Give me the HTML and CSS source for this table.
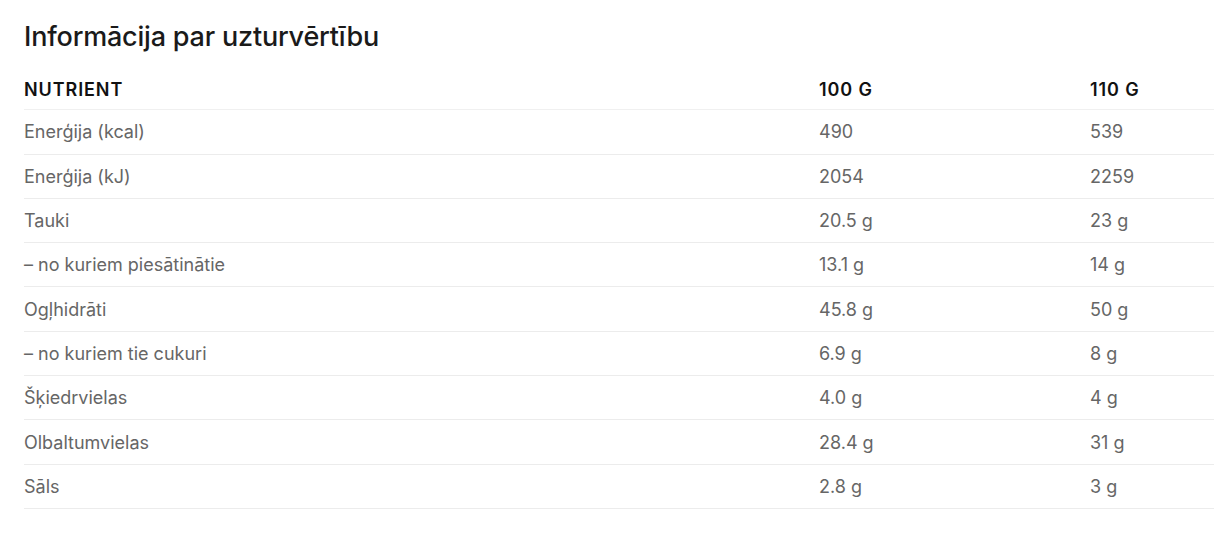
FILE: index.html
```html
<!DOCTYPE html>
<html lang="lv">

<head>
    <meta charset="UTF-8">
    <meta name="viewport" content="width=device-width, initial-scale=1.0">
    <title>Informācija par uzturvērtību</title>
    <link rel="stylesheet" href="styles.css">
</head>

<body>
    <div class="nutrition">
        <h2 class="nutrition-title">Informācija par uzturvērtību</h2>

        <table class="nutrition-table">
            <thead>
                <tr>
                    <th class="col-name">Nutrient</th>
                    <th class="col-a">100 g</th>
                    <th class="col-b">110 g</th>
                </tr>
            </thead>
            <tbody>
                <tr><td>Enerģija (kcal)</td><td>490</td><td>539</td></tr>
                <tr><td>Enerģija (kJ)</td><td>2054</td><td>2259</td></tr>
                <tr><td>Tauki</td><td>20.5 g</td><td>23 g</td></tr>
                <tr><td>– no kuriem piesātinātie</td><td>13.1 g</td><td>14 g</td></tr>
                <tr><td>Ogļhidrāti</td><td>45.8 g</td><td>50 g</td></tr>
                <tr><td>– no kuriem tie cukuri</td><td>6.9 g</td><td>8 g</td></tr>
                <tr><td>Šķiedrvielas</td><td>4.0 g</td><td>4 g</td></tr>
                <tr><td>Olbaltumvielas</td><td>28.4 g</td><td>31 g</td></tr>
                <tr><td>Sāls</td><td>2.8 g</td><td>3 g</td></tr>
            </tbody>
        </table>
    </div>
</body>

</html>
```

FILE: styles.css
```css
body {
    font-family: Inter, "Noto Sans", Arial, sans-serif;
    margin: 0;
    padding: 0;
    background-color: #fff;
}

.nutrition {
    padding: 20px 0 0 24px;
}

.nutrition-title {
    margin: 0 0 13px 0;
    font-size: 27px;
    line-height: 33px;
    font-weight: 500;
    color: #1a1a1a;
    letter-spacing: -0.2px;
}

.nutrition-table {
    width: 100%;
    border-collapse: collapse;
    table-layout: fixed;
}

.nutrition-table th,
.nutrition-table td {
    text-align: left;
    padding: 0;
    height: 43.3px;
    border-bottom: 1px solid #ececec;
}

.nutrition-table th {
    padding-top: 3px;
    height: 40.3px;
    font-size: 18px;
    font-weight: 600;
    color: #111;
    text-transform: uppercase;
    letter-spacing: 0.9px;
    border-bottom-color: #f0f0f0;
}

.nutrition-table td {
    font-size: 18px;
    font-weight: 400;
    color: #666;
}

.col-name {
    width: 795px;
}

.col-a {
    width: 271px;
}
```
